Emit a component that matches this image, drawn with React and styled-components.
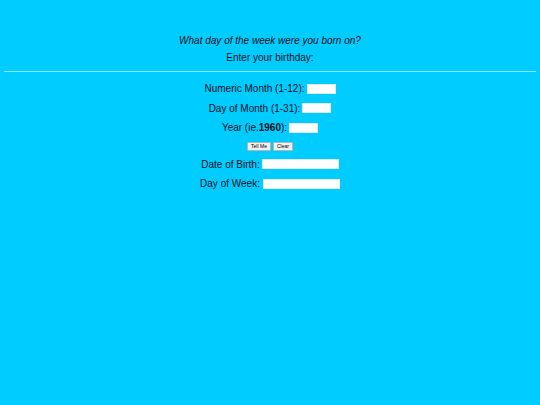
import React from 'react';
import styled, { createGlobalStyle } from 'styled-components';

const GlobalStyle = createGlobalStyle`
  html, body {
    margin: 0;
    padding: 0;
    background: #00ccff;
  }
  body {
    font-family: "Liberation Sans", Arial, sans-serif;
    color: #0a0f1a;
  }
`;

function App() {
  const [month, setMonth] = React.useState('');
  const [day, setDay] = React.useState('');
  const [year, setYear] = React.useState('');
  const [dob, setDob] = React.useState('');
  const [dow, setDow] = React.useState('');

  const days = ['Sunday', 'Monday', 'Tuesday', 'Wednesday', 'Thursday', 'Friday', 'Saturday'];

  const handleTell = (e) => {
    e.preventDefault();
    const d = new Date(Number(year), Number(month) - 1, Number(day));
    if (isNaN(d.getTime())) return;
    setDob(d.toDateString());
    setDow(days[d.getDay()]);
  };

  const handleClear = (e) => {
    e.preventDefault();
    setMonth(''); setDay(''); setYear(''); setDob(''); setDow('');
  };

  return (
    <>
      <GlobalStyle />
      <Page>
        <Title>What day of the week were you born on?</Title>
        <Subtitle>Enter your birthday:</Subtitle>
        <Rule />
        <Form onSubmit={handleTell}>
          <Row>
            Numeric Month (1-12):<Field size="short" value={month} onChange={(e) => setMonth(e.target.value)} />
          </Row>
          <Row>
            Day of Month (1-31):<Field size="short" value={day} onChange={(e) => setDay(e.target.value)} />
          </Row>
          <Row>
            Year (ie.<b>1960</b>):<Field size="short" value={year} onChange={(e) => setYear(e.target.value)} />
          </Row>
          <Buttons>
            <SmallButton type="submit">Tell Me</SmallButton>
            <SmallButton onClick={handleClear}>Clear</SmallButton>
          </Buttons>
          <Row>
            Date of Birth:<Field size="long" value={dob} readOnly />
          </Row>
          <Row>
            Day of Week:<Field size="long" gap={3} value={dow} readOnly />
          </Row>
        </Form>
      </Page>
    </>
  );
}

const Page = styled.div`
  min-height: 100vh;
  padding-top: 32px;
  box-sizing: border-box;
  font-size: 10px;
`;

const Title = styled.div`
  text-align: center;
  font-style: italic;
  line-height: 17px;
`;

const Subtitle = styled.div`
  text-align: center;
  line-height: 17px;
`;

const Rule = styled.hr`
  margin: 5px 4px 7px;
  border: none;
  border-top: 1px solid #8ae6ff;
  height: 0;
`;

const Form = styled.form`
  display: flex;
  flex-direction: column;
  align-items: center;
`;

const Row = styled.div`
  display: flex;
  align-items: center;
  justify-content: center;
  height: 19.5px;

  b {
    font-weight: bold;
  }
`;

const Field = styled.input`
  box-sizing: border-box;
  width: ${(p) => (p.size === 'long' ? '77px' : '29px')};
  height: 10px;
  margin-left: ${(p) => p.gap || 2}px;
  padding: 0;
  border: 1px solid #e2e8ea;
  background: #fff;
  font-size: 7px;
  outline: none;
`;

const Buttons = styled.div`
  display: flex;
  justify-content: center;
  gap: 2px;
  height: 17px;
  align-items: center;
`;

const SmallButton = styled.button`
  font-family: "Liberation Sans", Arial, sans-serif;
  font-size: 5px;
  height: 9px;
  padding: 0 3px;
  background: #f0f0f0;
  border: 1px solid #b4b4b4;
  border-radius: 1px;
  color: #000;
  line-height: 1;
`;

export default App;
